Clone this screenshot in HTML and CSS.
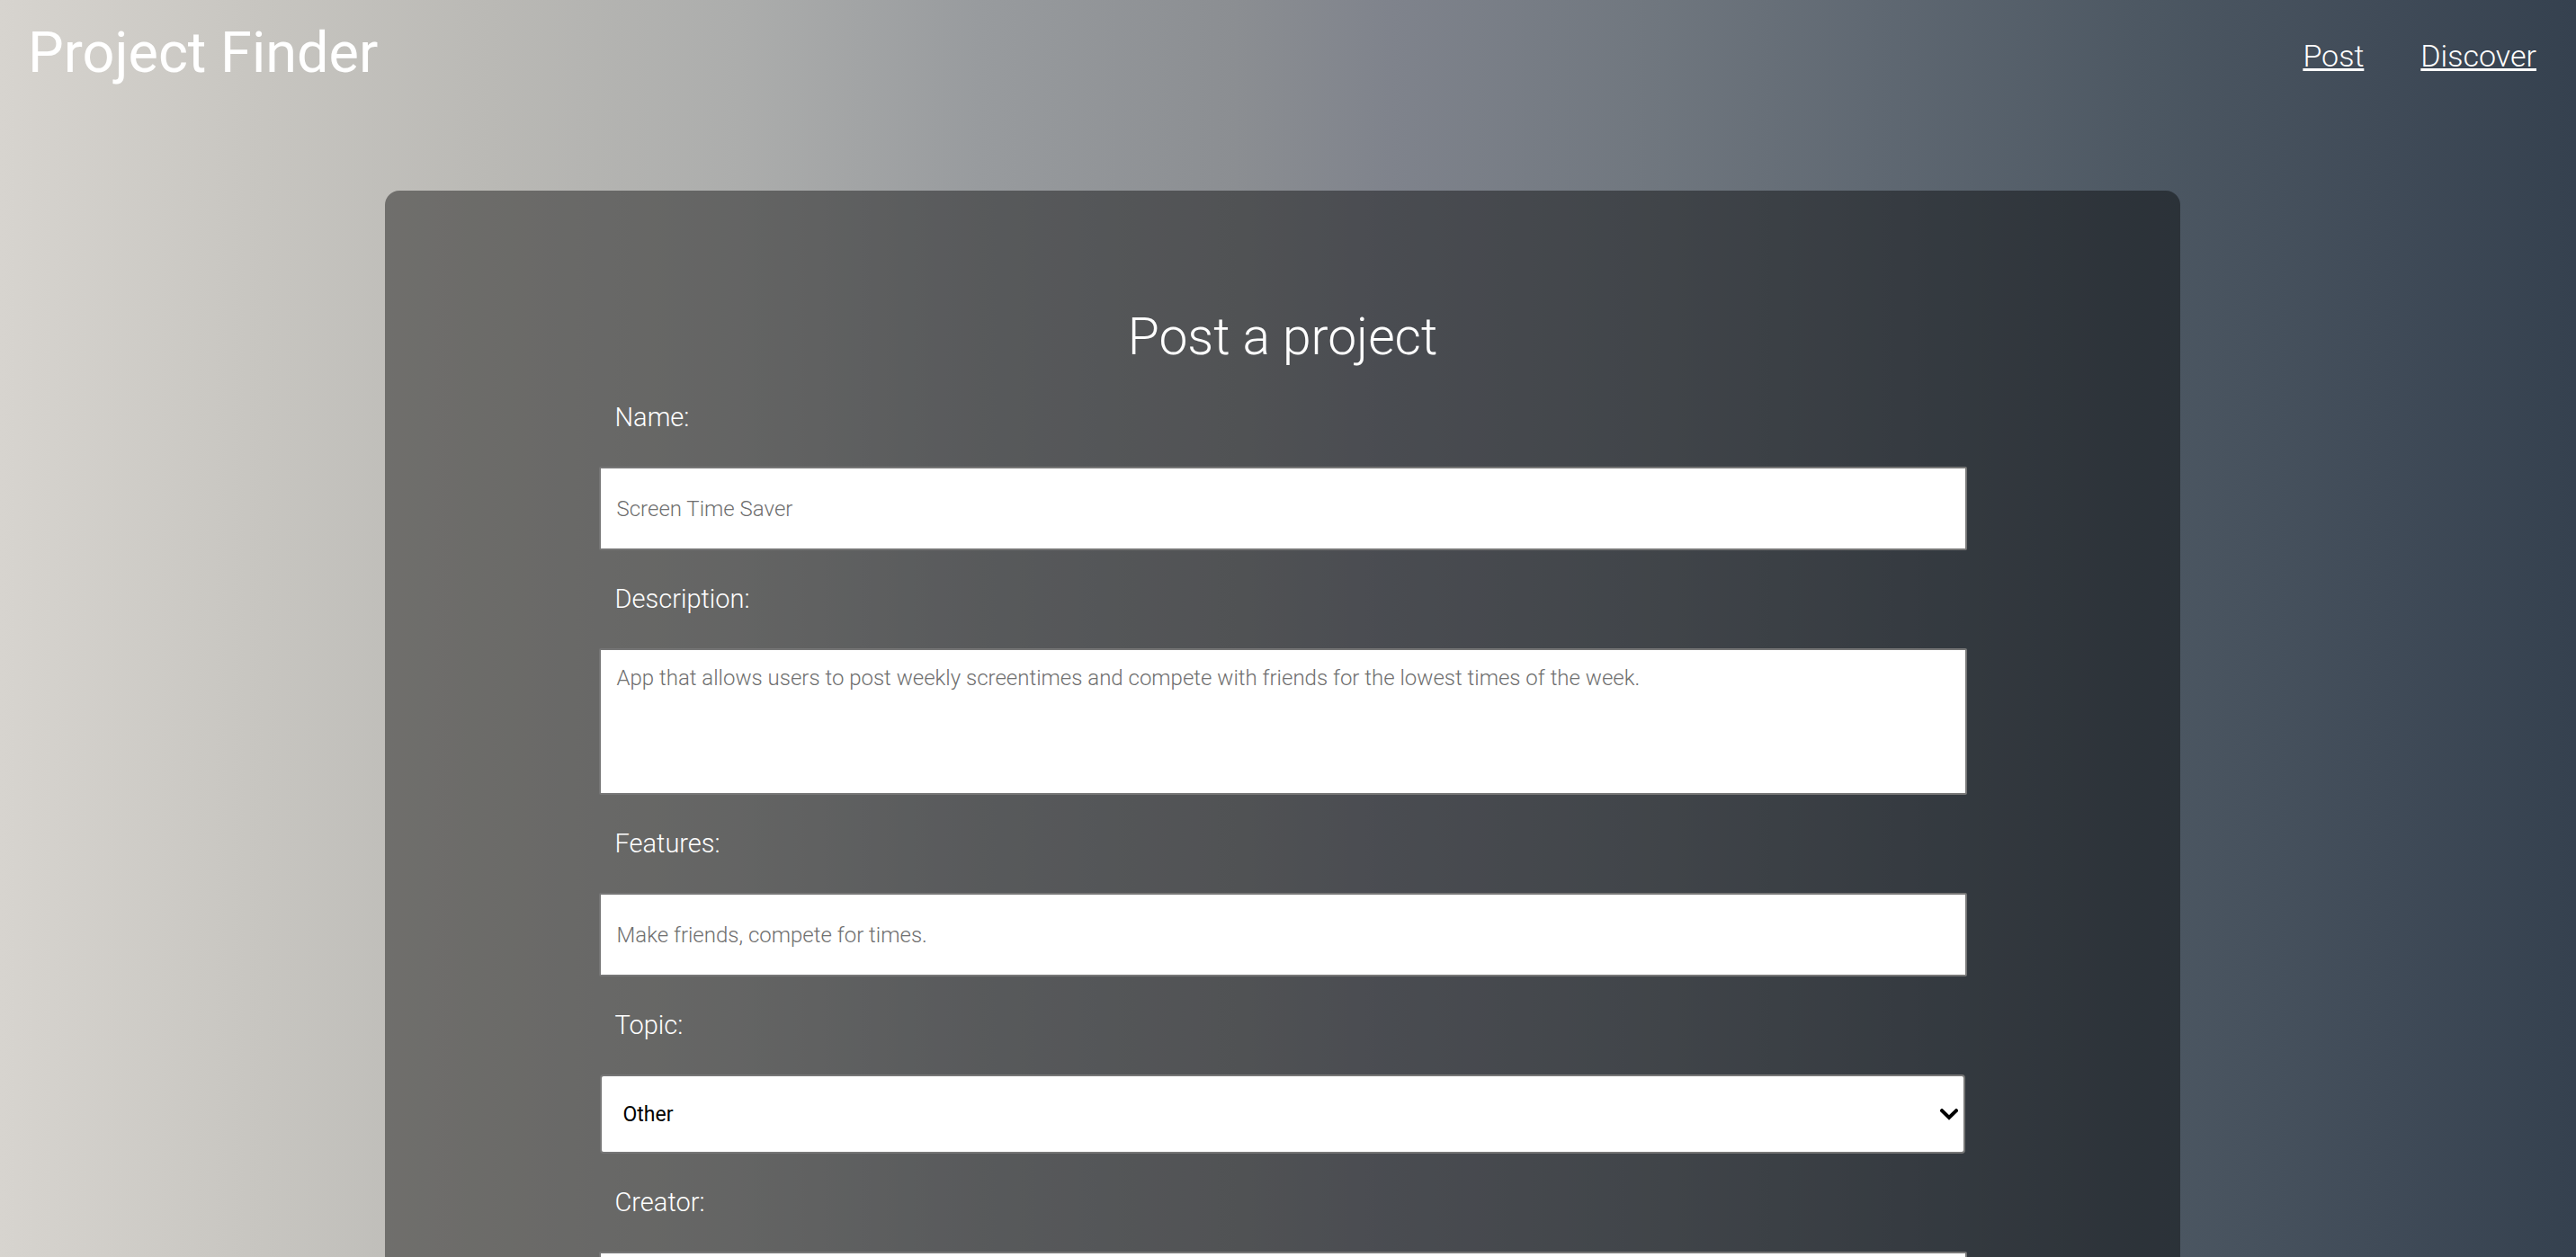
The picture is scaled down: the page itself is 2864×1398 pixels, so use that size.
FILE: index.html
```html
<!DOCTYPE html>
<html lang="en">
<head>
<meta charset="utf-8">
<title>Project Finder</title>
<link rel="stylesheet" href="styles.css">
</head>
<body>
<header class="topbar">
  <h1 class="brand">Project Finder</h1>
  <nav class="nav">
    <a class="nav-link" href="#">Post</a>
    <a class="nav-link" href="#">Discover</a>
  </nav>
</header>
<main class="card">
  <h2 class="card-title">Post a project</h2>
  <form class="post-form">
    <label class="field-label" for="name">Name:</label>
    <input class="field" id="name" type="text" placeholder="Screen Time Saver">
    <label class="field-label" for="desc">Description:</label>
    <textarea class="field field-area" id="desc" placeholder="App that allows users to post weekly screentimes and compete with friends for the lowest times of the week."></textarea>
    <label class="field-label" for="features">Features:</label>
    <input class="field" id="features" type="text" placeholder="Make friends, compete for times.">
    <label class="field-label" for="topic">Topic:</label>
    <div class="select-wrap">
      <select class="field-select" id="topic">
        <option>Other</option>
        <option>Web</option>
        <option>Mobile</option>
        <option>Games</option>
      </select>
      <svg class="select-arrow" width="20" height="13" viewBox="0 0 20 13" aria-hidden="true">
        <path d="M2 2.2 L10 10 L18 2.2" fill="none" stroke="#000" stroke-width="4" stroke-linecap="square" stroke-linejoin="miter"/>
      </svg>
    </div>
    <label class="field-label" for="creator">Creator:</label>
    <input class="field" id="creator" type="text" placeholder="Your name">
    <button class="submit" type="submit">Submit</button>
  </form>
</main>
</body>
</html>
```

FILE: styles.css
```css
html {
  scrollbar-width: none;
}
html::-webkit-scrollbar {
  display: none;
}
body {
  margin: 0;
  min-height: 100vh;
  font-family: Roboto, "Liberation Sans", sans-serif;
  color: #fff;
  background: linear-gradient(to right,
    rgb(215, 212, 207) 0%,
    rgb(200, 198, 193) 9.6%,
    rgb(186, 185, 181) 19%,
    rgb(172, 173, 172) 28.7%,
    rgb(152, 155, 158) 38%,
    rgb(139, 142, 146) 48%,
    rgb(127, 131, 140) 54%,
    rgb(112, 119, 127) 64%,
    rgb(95, 104, 114) 73%,
    rgb(77, 88, 99) 83%,
    rgb(64, 75, 88) 92.5%,
    rgb(53, 65, 79) 100%);
  background-attachment: fixed;
}

.topbar {
  display: flex;
  justify-content: space-between;
  align-items: flex-start;
  padding: 22px 44px 0 31px;
}
.brand {
  margin: 0;
  font-size: 63px;
  line-height: 74px;
  font-weight: 400;
}
.nav {
  display: flex;
  gap: 63px;
  margin-top: 20px;
}
.nav-link {
  color: #fff;
  font-size: 34px;
  line-height: 40px;
  font-weight: 300;
  text-decoration: underline;
}

.card {
  width: 1996px;
  margin: 116px 0 60px 428px;
  padding: 130px 0 80px;
  box-sizing: border-box;
  border-radius: 16px;
  background: rgba(0, 0, 0, 0.42);
}
.card-title {
  margin: 0 0 40px;
  text-align: center;
  font-size: 57px;
  line-height: 66px;
  font-weight: 300;
}
.post-form {
  width: 1521px;
  margin: 0 auto;
}
.field-label {
  display: block;
  margin: 38px 0;
  padding-left: 18px;
  font-size: 29px;
  line-height: 33px;
  font-weight: 300;
}
.field {
  display: block;
  width: 100%;
  height: 93px;
  box-sizing: border-box;
  margin: 0;
  padding: 0 18px;
  border: 2px solid #767676;
  border-radius: 2px;
  background: #fff;
  font-family: Roboto, "Liberation Sans", sans-serif;
  font-size: 24px;
  font-weight: 300;
  color: #222;
}
.field::placeholder {
  color: #6f6f6f;
}
.field-area {
  height: 163px;
  padding: 17px 18px;
  resize: none;
  line-height: 28px;
}
.select-wrap {
  position: relative;
  width: 1518px;
  margin-left: 1px;
}
.field-select {
  display: block;
  width: 100%;
  height: 88px;
  box-sizing: border-box;
  margin: 0;
  padding: 0 40px 0 24px;
  border: 2px solid #767676;
  border-radius: 4px;
  background-color: #fff;
  -webkit-appearance: none;
  appearance: none;
  font-family: Roboto, "Liberation Sans", sans-serif;
  font-size: 23px;
  font-weight: 400;
  color: #000;
}
.select-arrow {
  position: absolute;
  right: 8px;
  top: 38px;
  pointer-events: none;
}
.submit {
  display: block;
  margin: 40px auto 0;
  padding: 16px 48px;
  border: none;
  border-radius: 6px;
  background: #fff;
  color: #333;
  font-family: Roboto, "Liberation Sans", sans-serif;
  font-size: 24px;
}
```
